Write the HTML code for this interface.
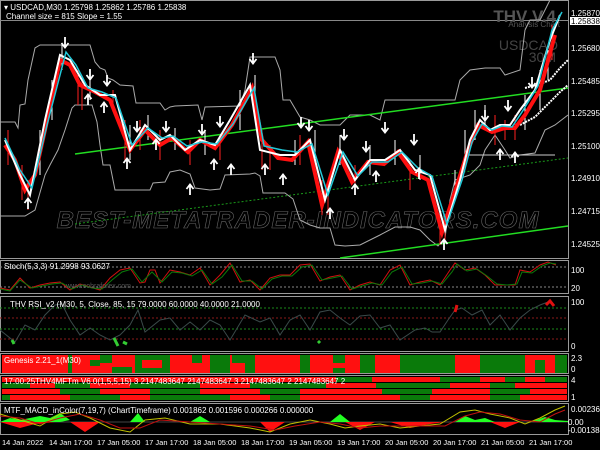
<!DOCTYPE html><html><head><style>
body{margin:0;background:#000;width:600px;height:450px;overflow:hidden;font-family:"Liberation Sans",sans-serif}
svg{display:block}
text{font-family:"Liberation Sans",sans-serif}
</style></head><body>
<svg width="600" height="450" viewBox="0 0 600 450">
<defs>
<g id="dn"><path d="M0,-7 V3 M-3.5,-1 L0,3.5 L3.5,-1" fill="none" stroke="#fff" stroke-width="1.8"/></g>
<g id="up"><path d="M0,7 V-3 M-3.5,1 L0,-3.5 L3.5,1" fill="none" stroke="#fff" stroke-width="1.8"/></g>
</defs>
<rect width="600" height="450" fill="#000"/>
<g fill="none" stroke="#9a9a9a" stroke-width="1">
<rect x="0.5" y="0.5" width="568" height="258"/>
<rect x="0.5" y="260.5" width="568" height="33"/>
<rect x="0.5" y="296.5" width="568" height="55"/>
<rect x="0.5" y="353.5" width="568" height="20"/>
<rect x="0.5" y="375.5" width="568" height="26"/>
<rect x="0.5" y="403.5" width="568" height="31"/>
</g>
<line x1="0" y1="20.5" x2="568" y2="20.5" stroke="#888"/>
<text x="298" y="228" text-anchor="middle" font-size="24" font-style="italic" font-weight="bold" fill="none" stroke="#666" stroke-width="0.6" letter-spacing="1">BEST-METATRADER-INDICATORS.COM</text>
<text x="556" y="22" text-anchor="end" font-size="17" font-weight="bold" fill="#555">THV V.4</text>
<text x="560" y="27" text-anchor="end" font-size="8" fill="#555">Analysis Chart</text>
<text x="558" y="50" text-anchor="end" font-size="14" fill="#444">USDCAD</text>
<text x="556" y="62" text-anchor="end" font-size="14" fill="#444">30M</text>
<polyline fill="none" stroke="#aaa" stroke-width="1" points="0,122 15,122 18,128 20,105 25,104 28,80 35,48 40,45 90,45 95,62 100,68 105,70 108,78 113,80 120,85 133,86 136,103 140,103 160,103 165,110 170,107 175,106 198,105 202,120 205,107 240,106 245,90 250,57 275,57 280,70 283,100 290,100 300,117 310,120 320,125 340,125 350,115 370,115 380,120 385,100 455,100 460,80 470,70 485,68 500,68 505,75 520,70 525,30 530,20 540,20 550,0"/>
<polyline fill="none" stroke="#aaa" stroke-width="1" points="0,216 25,216 35,210 45,175 50,165 58,150 65,130 72,108 75,105 92,105 97,122 100,145 103,165 110,165 115,190 130,190 150,190 153,183 165,182 170,172 180,170 190,174 195,188 210,190 220,189 225,175 250,174 255,173 260,176 263,193 270,193 285,193 293,199 300,220 310,225 320,228 330,228 335,245 345,246 360,245 380,235 395,227 410,227 420,230 430,240 438,246 445,238 450,200 455,180 470,175 480,165 485,150 495,135 505,150 510,158 520,155 535,153 545,130 555,125 568,115"/>
<line x1="75" y1="154" x2="568" y2="88" stroke="#22dd22" stroke-width="1.5"/>
<line x1="340" y1="258" x2="568" y2="226" stroke="#22dd22" stroke-width="1.5"/>
<line x1="75" y1="224" x2="568" y2="158" stroke="#1a9a1a" stroke-width="1" stroke-dasharray="2,2"/>
<line x1="465" y1="155" x2="555" y2="155" stroke="#ccc" stroke-width="1"/>
<polyline fill="none" stroke="#fff" stroke-width="2" stroke-dasharray="2,1" points="520,125 535,117 548,104 560,92 568,85"/>
<polyline fill="none" stroke="#fff" stroke-width="2" stroke-dasharray="2,1" points="525,88 540,84 550,80 560,68 568,60"/>
<!-- wicks -->
<g stroke="#ff2020" stroke-width="1">
<path d="M8,130V165 M22,165V200 M28,180V210 M78,70V105 M82,80V110 M113,90V112 M125,120V160 M140,120V150 M160,130V160 M190,140V165 M220,135V160 M262,130V170 M270,145V170 M300,135V165 M322,180V215 M328,190V215 M355,165V195 M410,160V190 M440,210V245 M445,220V242 M495,115V145 M505,120V140 M515,115V140 M552,25V60"/>
</g>
<g stroke="#fff" stroke-width="1">
<path d="M40,130V175 M52,80V120 M62,45V70 M90,80V100 M130,125V160 M148,115V140 M175,128V150 M205,130V155 M240,90V130 M255,75V110 M295,140V165 M315,130V160 M340,135V165 M370,145V175 M395,140V165 M420,155V180 M455,170V200 M465,130V165 M475,110V140 M485,105V130 M525,95V130 M540,70V110 M548,50V80"/>
</g>
<polyline fill="none" stroke="#ff1010" stroke-width="4" points="5,145 15,160 25,190 35,175 45,130 60,60 70,65 80,85 95,92 110,100 120,125 130,150 145,130 160,145 172,138 188,152 200,140 215,148 232,125 252,88 262,140 278,158 292,160 308,142 322,205 338,152 352,182 368,162 384,164 398,152 412,172 428,180 442,232 458,182 468,150 478,125 492,132 505,128 515,128 525,115 540,90 555,35"/>
<polyline fill="none" stroke="#fff" stroke-width="2" points="5,140 20,175 30,195 45,120 60,55 70,60 85,85 100,95 115,95 130,150 145,125 160,140 170,135 185,150 200,140 215,145 230,120 250,85 260,150 280,155 295,155 310,140 325,200 340,150 355,180 370,160 385,160 400,150 415,170 430,175 445,230 460,180 470,140 480,120 490,130 500,125 510,125 520,110 535,90 550,40 560,15"/>
<polyline fill="none" stroke="#22c8d8" stroke-width="1.5" points="5,138 20,170 32,188 47,125 66,52 76,65 88,88 102,92 116,98 132,145 148,128 162,138 173,136 187,146 202,142 217,144 233,124 254,88 264,146 282,150 297,152 312,144 328,195 343,152 358,176 372,162 388,162 402,152 418,168 432,176 447,224 462,180 472,142 482,124 492,130 502,126 512,127 522,112 538,86 552,30 562,12"/>
<!-- arrows -->
<use href="#dn" x="65" y="44"/><use href="#dn" x="90" y="76"/><use href="#dn" x="107" y="82"/><use href="#up" x="88" y="98"/><use href="#up" x="104" y="106"/><use href="#up" x="28" y="202"/>
<use href="#dn" x="137" y="128"/><use href="#dn" x="166" y="128"/><use href="#dn" x="202" y="131"/><use href="#dn" x="220" y="123"/><use href="#dn" x="253" y="60"/>
<use href="#up" x="127" y="162"/><use href="#up" x="156" y="143"/><use href="#up" x="190" y="188"/><use href="#up" x="214" y="163"/><use href="#up" x="231" y="168"/>
<use href="#dn" x="301" y="124"/><use href="#dn" x="309" y="127"/><use href="#dn" x="344" y="136"/><use href="#dn" x="366" y="148"/><use href="#dn" x="385" y="129"/><use href="#dn" x="414" y="141"/>
<use href="#up" x="265" y="168"/><use href="#up" x="283" y="178"/><use href="#up" x="330" y="212"/><use href="#up" x="355" y="188"/><use href="#up" x="376" y="175"/><use href="#up" x="419" y="172"/><use href="#up" x="444" y="243"/>
<use href="#dn" x="485" y="117"/><use href="#dn" x="508" y="107"/><use href="#dn" x="532" y="84"/><use href="#up" x="500" y="153"/><use href="#up" x="515" y="156"/>
<text x="4" y="10" font-size="8" fill="#fff">▾ USDCAD,M30  1.25798 1.25862 1.25786 1.25838</text>
<text x="6" y="19" font-size="8" fill="#fff">Channel size = 815 Slope = 1.55</text>
<g font-size="8" fill="#fff">
<text x="571" y="16">1.25870</text><text x="571" y="51">1.25680</text><text x="571" y="84">1.25485</text><text x="571" y="116">1.25295</text><text x="571" y="149">1.25100</text><text x="571" y="181">1.24910</text><text x="571" y="214">1.24715</text><text x="571" y="247">1.24525</text>
<text x="571" y="273">100</text><text x="571" y="291">20</text><text x="571" y="305">100</text><text x="571" y="349">0</text>
<text x="571" y="361">2.3</text><text x="571" y="372">0</text><text x="571" y="383">4</text><text x="571" y="400">1</text>
<text x="571" y="412">0.00236</text><text x="568" y="425">0.00</text><text x="568" y="433">-0.001384</text>
</g>
<rect x="570" y="17" width="30" height="8" fill="#fff"/><text x="571" y="24" font-size="8" fill="#000">1.25838</text>
<line x1="0" y1="267" x2="568" y2="267" stroke="#888" stroke-dasharray="2,2"/>
<line x1="0" y1="287" x2="568" y2="287" stroke="#888" stroke-dasharray="2,2"/>
<polyline fill="none" stroke="#d01010" stroke-width="1" points="0,288 10,290 20,278 30,288 40,285 50,283 60,282 70,290 80,284 90,287 100,290 110,278 120,270 130,268 140,283 145,282 150,270 155,270 160,283 170,270 180,272 190,275 200,268 210,285 220,275 230,263 240,282 250,280 260,290 270,278 280,275 290,275 300,265 310,264 320,281 330,277 340,275 350,290 360,285 370,282 380,285 390,270 400,265 410,285 420,282 430,280 440,285 450,270 455,263 465,270 475,268 485,275 495,285 505,285 515,285 520,270 530,272 540,265 548,262 556,265"/>
<polyline fill="none" stroke="#0a7a0a" stroke-width="1" points="0,289 10,291 20,280 32,288 42,286 52,284 62,283 72,289 82,285 92,288 102,289 112,280 122,272 132,269 142,282 152,272 162,282 172,272 182,273 192,276 202,270 212,284 222,277 232,265 242,281 252,281 262,289 272,279 282,276 292,276 302,267 312,265 322,280 332,278 342,276 352,289 362,286 372,283 382,285 392,272 402,267 412,284 422,283 432,281 442,284 452,272 457,264 467,271 477,269 487,276 497,284 507,285 517,284 522,272 532,273 542,266 550,263 556,264"/>
<text x="4" y="269" font-size="8" fill="#fff">Stoch(5,3,3) 91.2998 93.0627</text>
<text x="66" y="288" font-size="7" fill="#555">www.cobraforex.com</text>
<line x1="0" y1="308" x2="568" y2="308" stroke="#1a8a1a" stroke-dasharray="2,2"/>
<line x1="0" y1="318" x2="568" y2="318" stroke="#8a1a1a" stroke-dasharray="2,2"/>
<line x1="0" y1="329" x2="568" y2="329" stroke="#1a8a1a" stroke-dasharray="2,2"/>
<line x1="0" y1="339" x2="568" y2="339" stroke="#8a1a1a" stroke-dasharray="2,2"/>
<polyline fill="none" stroke="#3a4a4a" stroke-width="1" points="0,330 10,338 15,342 25,325 35,330 45,315 55,305 62,304 70,320 80,335 90,328 100,335 110,340 120,335 130,325 138,310 145,332 160,320 170,318 180,330 190,322 200,330 210,320 220,325 230,340 245,315 260,322 270,318 280,335 290,320 300,315 310,330 320,312 330,310 340,318 350,325 360,316 370,315 380,328 390,325 400,340 415,330 425,328 432,332 440,332 448,320 455,310 462,308 472,315 482,310 490,325 500,315 510,330 520,318 530,310 540,305 548,302"/>
<polyline fill="none" stroke="#e01010" stroke-width="3" points="455,312 457,305"/>
<polyline fill="none" stroke="#e01010" stroke-width="3" points="546,305 550,301 554,306"/>
<polyline fill="none" stroke="#3c3" stroke-width="3" points="12,340 14,344"/>
<polyline fill="none" stroke="#3c3" stroke-width="3" points="114,338 118,346"/>
<polyline fill="none" stroke="#3c3" stroke-width="3" points="123,342 127,344"/>
<polyline fill="none" stroke="#3c3" stroke-width="3" points="318,341 320,343"/>
<text x="10" y="307" font-size="8" fill="#fff">THV RSI_v2   (M30,  5,  Close,  85,  15 79.0000 60.0000 40.0000 21.0000</text>
<rect x="2" y="355" width="565" height="18" fill="#ff1010"/>
<g fill="#0a7a0a">
<rect x="68" y="355" width="4" height="18"/><rect x="90" y="360" width="10" height="6"/><rect x="100" y="355" width="12" height="8"/><rect x="112" y="367" width="20" height="6"/>
<rect x="135" y="355" width="35" height="18"/><rect x="142" y="360" width="20" height="8" fill="#ff1010"/>
<rect x="192" y="355" width="10" height="8"/><rect x="210" y="355" width="20" height="18"/><rect x="232" y="355" width="23" height="8"/><rect x="245" y="363" width="10" height="10"/>
<rect x="300" y="355" width="10" height="18"/><rect x="333" y="355" width="12" height="8"/><rect x="333" y="368" width="12" height="5"/><rect x="360" y="355" width="15" height="18"/><rect x="400" y="355" width="55" height="18"/><rect x="480" y="355" width="45" height="18"/><rect x="535" y="360" width="10" height="13"/><rect x="555" y="355" width="12" height="18"/>
</g>
<text x="4" y="363" font-size="8" fill="#fff">Genesis 2.21_1(M30)</text>
<rect x="2" y="377" width="565" height="5" fill="#ff1010"/><rect x="2" y="383" width="565" height="5" fill="#0a7a0a"/><rect x="2" y="389" width="565" height="5" fill="#ff1010"/><rect x="2" y="395" width="565" height="5" fill="#0a7a0a"/>
<g fill="#0a7a0a"><rect x="336" y="377" width="36" height="5"/><rect x="440" y="377" width="40" height="5"/><rect x="505" y="377" width="20" height="5"/><rect x="545" y="377" width="22" height="5"/></g>
<g fill="#ff1010"><rect x="30" y="383" width="25" height="5"/><rect x="90" y="383" width="40" height="5"/><rect x="200" y="383" width="50" height="5"/><rect x="326" y="383" width="50" height="5"/><rect x="450" y="383" width="40" height="5"/><rect x="515" y="383" width="52" height="5"/></g>
<g fill="#0a7a0a"><rect x="60" y="389" width="40" height="5"/><rect x="150" y="389" width="50" height="5"/><rect x="260" y="389" width="40" height="5"/><rect x="382" y="389" width="50" height="5"/><rect x="490" y="389" width="40" height="5"/></g>
<g fill="#ff1010"><rect x="10" y="395" width="60" height="5"/><rect x="120" y="395" width="30" height="5"/><rect x="230" y="395" width="40" height="5"/><rect x="300" y="395" width="100" height="5"/><rect x="430" y="395" width="60" height="5"/><rect x="520" y="395" width="47" height="5"/></g>
<text x="4" y="384" font-size="8" fill="#fff">17:00:25THV4MFTm V6.0(1,5,5,15) 3 2147483647 2147483647 3 2147483647 2 2147483647 2</text>
<line x1="0" y1="422" x2="568" y2="422" stroke="#444"/>
<g fill="#22ff22">
<polygon points="0,422 10,418 20,420 30,418 40,416 50,418 60,413 70,420 60,422"/>
<polygon points="130,422 138,413 145,422"/><polygon points="190,422 200,416 210,422"/><polygon points="330,422 340,414 350,422"/><polygon points="455,422 465,416 475,420 485,418 495,422"/><polygon points="530,422 545,417 555,420 568,421 568,422"/>
</g>
<g fill="#ff1010">
<polygon points="0,422 20,428 35,424 55,422"/><polygon points="70,422 85,432 100,422"/><polygon points="260,422 270,432 285,422"/><polygon points="345,422 360,430 375,422"/><polygon points="490,422 505,428 520,422"/><polygon points="390,422 410,428 430,424 445,422"/>
</g>
<polyline fill="none" stroke="#c0c000" stroke-width="1" points="0,414 20,420 40,426 60,414 75,412 90,418 110,428 130,432 145,420 165,418 190,424 220,424 250,428 270,432 290,424 310,420 330,424 345,428 360,426 380,424 400,428 420,426 440,424 460,412 475,410 490,414 510,418 525,424 540,418 555,410 565,406"/>
<polyline fill="none" stroke="#c01010" stroke-width="1" points="0,416 20,418 40,424 60,418 80,414 100,420 120,428 140,428 160,420 190,422 220,424 250,426 275,430 295,426 320,422 340,424 360,428 380,426 400,426 420,426 445,426 465,416 480,412 500,414 520,420 540,422 555,414 565,410"/>
<text x="4" y="413" font-size="8" fill="#fff">MTF_MACD_inColor(7,19,7) (ChartTimeframe) 0.001862 0.001596 0.000266 0.000000</text>
<g font-size="7.5" fill="#fff">
<text x="2" y="445">14 Jan 2022</text><text x="49" y="445">14 Jan 17:00</text><text x="97" y="445">17 Jan 05:00</text><text x="145" y="445">17 Jan 17:00</text><text x="193" y="445">18 Jan 05:00</text><text x="241" y="445">18 Jan 17:00</text><text x="289" y="445">19 Jan 05:00</text><text x="337" y="445">19 Jan 17:00</text><text x="385" y="445">20 Jan 05:00</text><text x="433" y="445">20 Jan 17:00</text><text x="481" y="445">21 Jan 05:00</text><text x="529" y="445">21 Jan 17:00</text>
</g>
</svg>
</body></html>
